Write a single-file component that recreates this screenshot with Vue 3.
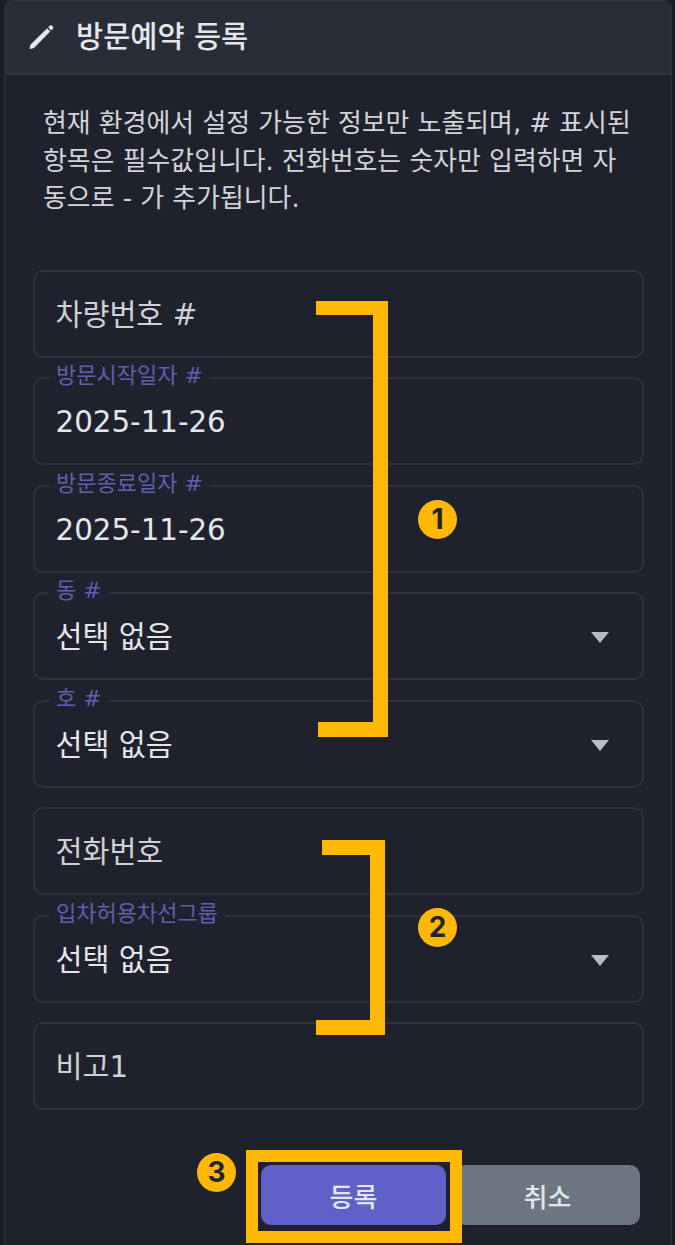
<template>
  <div class="page">
    <section class="card">
      <header class="card-head">
        <svg class="pencil" viewBox="0 0 28 28" width="28" height="28">
          <path d="M1.6 25.2 L2.6 21.6 L19.2 5.2 L22.2 8.4 L6 25 L2.4 26 Z" fill="#e4e6ea" />
          <path d="M20.2 4.2 L21.6 2.8 Q22.8 1.8 24 2.8 L24.8 3.6 Q25.8 4.8 24.8 6 L23.2 7.4 Z" fill="#e4e6ea" />
        </svg>
        <h1>방문예약 등록</h1>
      </header>
      <div class="card-body">
        <p class="notice">현재 환경에서 설정 가능한 정보만 노출되며, # 표시된 항목은 필수값입니다. 전화번호는 숫자만 입력하면 자동으로 - 가 추가됩니다.</p>
        <form class="fields" @submit.prevent>
          <div v-for="f in fields" :key="f.name" class="field">
            <label v-if="f.value" class="float-label">{{ f.name }}</label>
            <span class="value" :class="{ placeholder: !f.value }">{{ f.value || f.name }}</span>
            <span v-if="f.select" class="caret"></span>
          </div>
        </form>
        <div class="actions">
          <button class="btn primary" type="button">등록</button>
          <button class="btn cancel" type="button">취소</button>
        </div>
      </div>
    </section>

    <!-- annotations painted on top of the screenshot -->
    <svg class="brackets" viewBox="0 0 675 1245" width="675" height="1245">
      <path d="M316 301 H388 V737 H318 V722 H373 V315 H316 Z" fill="#ffb805" />
      <path d="M322 840 H385 V1035 H316 V1020 H370 V855 H322 Z" fill="#ffb805" />
    </svg>
    <div class="marker"></div>
    <span class="badge n1">1</span>
    <span class="badge n2">2</span>
    <span class="badge n3">3</span>
  </div>
</template>

<script setup>
const fields = [
  { name: '차량번호 #' },
  { name: '방문시작일자 #', value: '2025-11-26' },
  { name: '방문종료일자 #', value: '2025-11-26' },
  { name: '동 #', value: '선택 없음', select: true },
  { name: '호 #', value: '선택 없음', select: true },
  { name: '전화번호' },
  { name: '입차허용차선그룹', value: '선택 없음', select: true },
  { name: '비고1' },
]
</script>

<style>
html, body {
  margin: 0;
  background: #1b1d26;
}
</style>

<style scoped>
.page {
  position: relative;
  width: 675px;
  height: 1245px;
  overflow: hidden;
  padding: 0 3px 0 4px;
  box-sizing: border-box;
  font-family: "DejaVu Sans", "Noto Sans CJK KR", sans-serif;
}
.card {
  height: 1260px;
  background: #1f222c;
  border: 1px solid #2f333e;
  border-radius: 8px;
  box-sizing: border-box;
}
.card-head {
  display: flex;
  align-items: center;
  gap: 20px;
  height: 74px;
  padding: 0 0 0 23px;
  background: #292d38;
  border-bottom: 2px solid #323642;
  border-radius: 8px 8px 0 0;
  box-sizing: border-box;
}
.pencil {
  flex: none;
}
h1 {
  margin: 0;
  font-size: 29.5px;
  font-weight: 500;
  line-height: 36px;
  color: #e4e6ea;
}
.card-body {
  padding: 30px 27px 0 28px;
}
.notice {
  margin: 0;
  padding: 0 4px 0 10px;
  font-size: 25.9px;
  line-height: 37.5px;
  color: #d2d4d9;
}
.fields {
  display: flex;
  flex-direction: column;
  gap: 19.5px;
  margin-top: 52px;
}
.field {
  position: relative;
  display: flex;
  align-items: center;
  height: 88px;
  padding: 0 21px 0 20.5px;
  border: 2px solid #2e323d;
  border-radius: 10px;
  box-sizing: border-box;
}
.value {
  font-size: 29.3px;
  line-height: 38px;
  color: #e4e6ea;
  margin-top: 2px;
}
.value.placeholder {
  color: #cfd1d6;
}
.float-label {
  position: absolute;
  top: -16px;
  left: 14px;
  padding: 0 7px;
  background: #1f222c;
  font-size: 22px;
  line-height: 26px;
  color: #5e5fb0;
}
.caret {
  position: absolute;
  right: 33px;
  top: 38px;
  width: 0;
  height: 0;
  border-left: 9.5px solid transparent;
  border-right: 9.5px solid transparent;
  border-top: 11px solid #b9bbc4;
}
.actions {
  display: flex;
  justify-content: flex-end;
  gap: 9px;
  margin-top: 55px;
  padding-right: 4px;
}
.btn {
  width: 185px;
  height: 60px;
  border: none;
  border-radius: 10px;
  font-family: inherit;
  font-size: 26px;
  font-weight: 500;
  color: #e4e6ea;
}
.btn.primary {
  background: #5f60c8;
}
.btn.cancel {
  background: #6b7680;
}

.brackets {
  position: absolute;
  left: 0;
  top: 0;
}
.marker {
  position: absolute;
  left: 246px;
  top: 1150px;
  width: 216px;
  height: 93px;
  box-sizing: border-box;
  border: 12px solid #ffb805;
}
.badge {
  position: absolute;
  width: 39px;
  height: 39px;
  border-radius: 50%;
  background: #ffb805;
  color: #23242a;
  font-family: Inter, "Liberation Sans", sans-serif;
  font-size: 28px;
  font-weight: 700;
  line-height: 39px;
  text-align: center;
}
.n1 { left: 418px; top: 500px; }
.n2 { left: 418px; top: 908px; }
.n3 { left: 197px; top: 1153px; }
</style>
